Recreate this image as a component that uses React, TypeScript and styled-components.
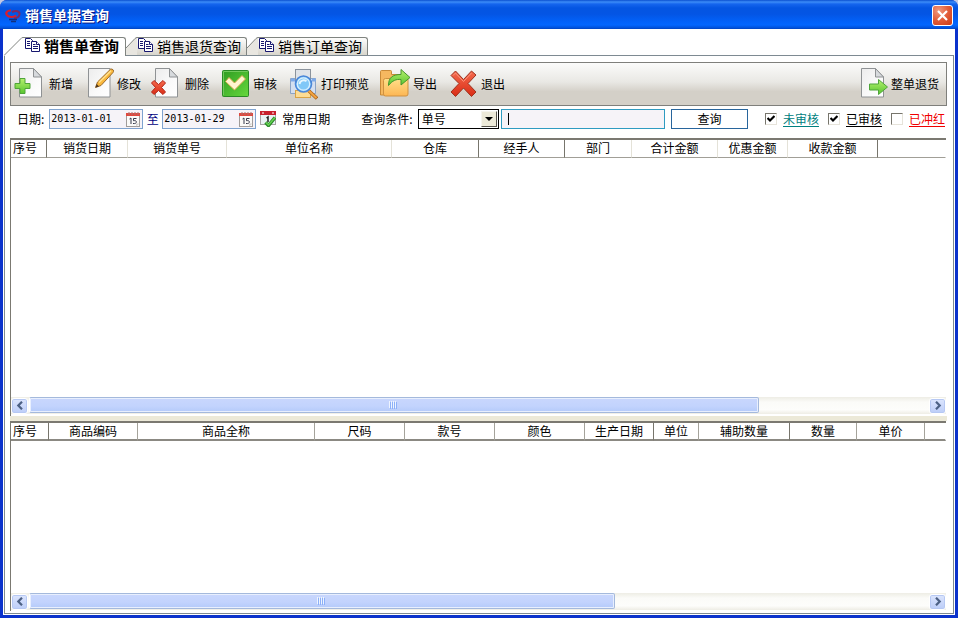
import React from "react";
import styled, { createGlobalStyle, css } from "styled-components";

const Global = createGlobalStyle`
  * { box-sizing: border-box; }
  html, body { margin: 0; padding: 0; background: #c3c9e4; }
  body, button, input, select, table {
    font-family: "Noto Sans CJK SC", sans-serif;
    font-size: 12px;
    line-height: 16px;
    color: #000;
  }
`;

const Window = styled.div`
  height: 100vh;
  display: flex;
  flex-direction: column;
  background: #0a32cc;
  border-radius: 7px 7px 0 0;
  overflow: hidden;
`;

const TitleBar = styled.header`
  height: 29px;
  flex: none;
  display: flex;
  align-items: center;
  gap: 4px;
  padding: 2px 5px 0 5px;
  background: linear-gradient(
    #0a4fd0 0,
    #3c8cf8 2px,
    #1565ee 4px,
    #0455e2 8px,
    #0455e4 14px,
    #0262fa 22px,
    #0366fe 25px,
    #0150d8 28px,
    #0141bd 29px
  );
`;

const Title = styled.h1`
  flex: 1;
  margin: 0;
  padding-bottom: 2px;
  font-size: 14px;
  line-height: 20px;
  font-weight: 700;
  color: #fff;
  text-shadow: 1px 1px 0 #0a1883;
`;

const CloseButton = styled.button`
  width: 21px;
  height: 21px;
  padding: 0;
  display: grid;
  place-items: center;
  border: 1px solid #fff;
  border-radius: 3px;
  background: radial-gradient(circle at 30% 25%, #f09a80, #e25c38 50%, #cc3a14);
`;

const Client = styled.main`
  flex: 1;
  min-height: 0;
  margin: 0 3px 3px 3px;
  padding: 8px 1px 1px 1px;
  display: flex;
  flex-direction: column;
  background: #fff;
`;

const TabStrip = styled.nav`
  display: flex;
  align-items: flex-end;
  height: 18px;
  flex: none;
`;

const TabButton = styled.button<{ $active?: boolean }>`
  display: flex;
  height: ${(p) => (p.$active ? 19 : 18)}px;
  margin-bottom: ${(p) => (p.$active ? -1 : 0)}px;
  padding: 0;
  border: 0;
  background: none;
  z-index: ${(p) => (p.$active ? 1 : 0)};
`;

const TabFace = styled.span<{ $active?: boolean }>`
  height: 100%;
  display: flex;
  align-items: center;
  gap: 3px;
  padding: 0 5px 0 1px;
  border-top: 1px solid #808480;
  border-right: 1px solid #808480;
  border-top-right-radius: 3px;
  line-height: 16px;
  font-size: 14px;
  background: linear-gradient(#fdfdfc, #d8d5cc);
  svg { align-self: flex-start; }
  ${(p) =>
    p.$active &&
    css`
      padding: 0 6px 0 2px;
      font-size: 15px;
      font-weight: 700;
      background: #fff;
    `}
`;

const TabText = styled.span`
  padding-bottom: 2px;
`;

const Panel = styled.section`
  flex: 1;
  min-height: 0;
  display: flex;
  flex-direction: column;
  padding: 6px 6px 2px 5px;
  border: 1px solid #7e8a92;
  background: #fff;
`;

const Toolbar = styled.div`
  flex: none;
  height: 44px;
  display: flex;
  align-items: center;
  gap: 9px;
  padding: 0 7px 0 3px;
  border: 1px solid #7f7f7b;
  background: linear-gradient(#fbfbfa, #e9e8e4 45%, #d4d0c8 68%, #d4d0c8);
`;

const ToolButton = styled.button`
  display: flex;
  align-items: center;
  gap: 3px;
  padding: 0;
  border: 0;
  background: none;
  white-space: nowrap;
  svg { display: block; }
`;

const Spacer = styled.span`
  flex: 1;
`;

const FilterRow = styled.form`
  flex: none;
  display: flex;
  align-items: center;
  padding: 3px 2px 9px 7px;
  white-space: nowrap;
`;

const FieldLabel = styled.label`
  margin-right: 5px;
`;

const DateBox = styled.span`
  width: 94px;
  height: 20px;
  display: flex;
  align-items: center;
  padding: 0 1px;
  border: 1px solid #7fa3cf;
  background: #f6f3f8;
`;

const DateInput = styled.input`
  flex: 1;
  min-width: 0;
  width: 20px;
  height: 16px;
  padding: 0;
  border: 0;
  outline: 0;
  background: transparent;
  font-family: "DejaVu Sans Mono", monospace;
  font-size: 10px;
`;

const PlainButton = styled.button`
  display: flex;
  padding: 0;
  border: 0;
  background: none;
`;

const Between = styled.span`
  width: 19px;
  text-align: center;
  color: #000080;
`;

const CommonDates = styled.button`
  display: flex;
  align-items: center;
  gap: 6px;
  margin: 0 31px 0 4px;
  padding: 0;
  border: 0;
  background: none;
`;

const SelectBox = styled.span`
  width: 81px;
  height: 20px;
  display: flex;
  align-items: center;
  padding-right: 1px;
  border: 1px solid #000;
  background: #fff;
`;

const Select = styled.select`
  flex: 1;
  min-width: 0;
  height: 18px;
  padding: 0 0 0 3px;
  border: 0;
  outline: 0;
  appearance: none;
  background: transparent;
`;

const DropArrow = styled.span`
  width: 16px;
  height: 16px;
  display: grid;
  place-items: center;
  border: 1px solid;
  border-color: #f5f4ee #55534c #55534c #f5f4ee;
  background: #ece9d8;
`;

const SearchBox = styled.span`
  flex: 1;
  height: 20px;
  display: flex;
  align-items: center;
  margin: 0 6px 0 2px;
  padding-left: 6px;
  border: 1px solid #2f9bc1;
  background: #f6f3f8;
`;

const Caret = styled.span`
  width: 1px;
  height: 12px;
  background: #000;
`;

const SearchInput = styled.input`
  flex: 1;
  min-width: 0;
  height: 16px;
  padding: 0;
  border: 0;
  outline: 0;
  background: transparent;
`;

const QueryButton = styled.button`
  width: 77px;
  height: 20px;
  margin-right: 8px;
  padding: 0;
  border: 1px solid #28659c;
  background: #fff;
`;

const CheckLabel = styled.label<{ $tone: string }>`
  display: flex;
  align-items: center;
  gap: 6px;
  margin-left: 9px;
  line-height: 15px;
  color: ${(p) => p.$tone};
`;

const CheckText = styled.span`
  line-height: 14px;
  border-bottom: 1px solid currentColor;
`;

const CheckStack = styled.span`
  display: grid;
  > * { grid-area: 1 / 1; }
  svg { pointer-events: none; margin: 2px; }
`;

const CheckInput = styled.input`
  appearance: none;
  width: 12px;
  height: 12px;
  margin: 0;
  border: 1px solid;
  border-color: #77756c #e6e3da #e6e3da #77756c;
  background: #fff;
  & + svg { visibility: hidden; }
  &:checked + svg { visibility: visible; }
`;

const GridFrame = styled.div<{ $lower?: boolean }>`
  ${(p) => (p.$lower ? "flex: none; height: 190px;" : "flex: 1; min-height: 0;")}
  display: flex;
  flex-direction: column;
  margin-right: 1px;
  padding-bottom: ${(p) => (p.$lower ? 1 : 2)}px;
  border-top: 2px solid #7b7971;
  border-left: 1px solid #7b7971;
  background: #fff;
`;

const HeaderTable = styled.table`
  width: 100%;
  table-layout: fixed;
  border-collapse: separate;
  border-spacing: 0;
`;

type Edge = "dark" | "light" | "mid" | "none";
const edgeColour = { dark: "#77756c", light: "#e4e2d8", mid: "#a5a39b", none: "transparent" };

const HeaderCell = styled.th<{ $edge: Edge; $lower?: boolean }>`
  height: 18px;
  padding: 0;
  font-weight: 400;
  line-height: ${(p) => (p.$lower ? 16 : 15)}px;
  vertical-align: top;
  text-align: center;
  white-space: nowrap;
  overflow: hidden;
  border-right: 1px solid ${(p) => edgeColour[p.$edge]};
  border-bottom: ${(p) => (p.$lower ? "2px solid #8b8982" : "1px solid #a19f97")};
  &:first-child { text-align: left; padding-left: 2px; }
`;

const GridBody = styled.div`
  flex: 1;
`;

const ScrollBar = styled.div`
  flex: none;
  height: 17px;
  display: flex;
  align-items: center;
  background: linear-gradient(#eeede5, #fbfbf8 30%, #fdfdfb 75%, #eeede5);
`;

const ScrollButton = styled.button`
  width: 17px;
  height: 16px;
  padding: 0;
  display: grid;
  place-items: center;
  border: 1px solid #fff;
  border-radius: 3px;
  background: linear-gradient(#dce5fd, #bccdf8);
  box-shadow: inset 0 0 0 1px #b6c8f3;
`;

const ScrollTrack = styled.div`
  flex: 1;
  height: 100%;
`;

const Thumb = styled.div`
  height: 16px;
  margin-left: 1px;
  display: grid;
  place-items: center;
  border: 1px solid #a4b9dc;
  border-left-color: #fff;
  border-radius: 2px;
  box-shadow: inset 0 0 0 1px #e8effe;
  background: linear-gradient(#c9d7fd, #c2d3fd 60%, #b4cafa);
`;

const Splitter = styled.div`
  flex: none;
  height: 5px;
  background: #ece9d8;
`;

const CopyIcon = () => (
  <svg width="16" height="15" viewBox="0 0 16 15" fill="#fff" stroke="#16166e" strokeWidth="1">
    <path d="M.5.5h5l2 2v8h-7z" />
    <path d="M2 3.500h3M2 5.500h3M2 7.500h3" />
    <path d="M6.500 3.500h5l3 3v7h-8z" />
    <path d="M11.500 3.500v3h3M8 6.500h2.500M8 8.500h5M8 10.500h5" />
  </svg>
);

const Slant = ({ active }: { active?: boolean }) =>
  active ? (
    <svg width="19" height="19" viewBox="0 0 19 19">
      <path d="M0 18.500 17 1.500Q17.500.5 19 .5V19H0z" fill="#fff" />
      <path d="M0 18.500 17 1.500Q17.500.5 19 .5" fill="none" stroke="#808480" />
    </svg>
  ) : (
    <svg width="11" height="18" viewBox="0 0 11 18">
      <path d="M0 11 9 1.500 11 .5V18H0z" fill="#e8e6e0" />
      <path d="M0 11 9 1.500Q10 .5 11 .5" fill="none" stroke="#808480" />
    </svg>
  );

const LogoIcon = () => (
  <svg width="16" height="16" viewBox="0 0 16 16" fill="none">
    <path d="M6 2.500C1 2.500 0 6 3 8c2.500 1.500 6 1.200 8-.5" stroke="#d81e2e" strokeWidth="2.200" />
    <path d="M7 4c4-2 8-1 7.500 2.500C14.200 9 12 10 9 10.500" stroke="#7c2a62" strokeWidth="2" />
    <path d="M4 11.500h8M6 13.500h5" stroke="#12307e" strokeWidth="1.600" />
  </svg>
);

const Gradients = () => (
  <defs>
    <linearGradient id="paper" x1="0" y1="0" x2="1" y2="1">
      <stop offset="0" stopColor="#ececec" /><stop offset=".6" stopColor="#fafafa" /><stop offset="1" stopColor="#fff" />
    </linearGradient>
    <linearGradient id="green" x1="0" y1="0" x2="0" y2="1">
      <stop offset="0" stopColor="#b5f06f" /><stop offset="1" stopColor="#58c52f" />
    </linearGradient>
    <linearGradient id="tile" x1="0" y1="0" x2="1" y2="1">
      <stop offset="0" stopColor="#2f9c22" /><stop offset="1" stopColor="#66d83c" />
    </linearGradient>
    <linearGradient id="folder" x1="0" y1="0" x2="0" y2="1">
      <stop offset="0" stopColor="#ffe08a" /><stop offset="1" stopColor="#fdb654" />
    </linearGradient>
    <linearGradient id="red" x1="0" y1="0" x2="0" y2="1">
      <stop offset="0" stopColor="#f56b4f" /><stop offset="1" stopColor="#d92b14" />
    </linearGradient>
  </defs>
);

const Paper = () => (
  <>
    <path d="M5.500.5h14l8 8.500v20h-22z" fill="url(#paper)" stroke="#8f9294" />
    <path d="M19.500.5V9h8z" fill="#d7dadd" stroke="#8f9294" />
  </>
);

const Art = ({ children }: { children: React.ReactNode }) => (
  <svg width="32" height="32" viewBox="0 0 32 32">
    <Gradients />
    {children}
  </svg>
);

const NewArt = () => (
  <Art>
    <Paper />
    <path d="M6 10.500h5v5h5v5h-5v5H6v-5H1v-5h5z" fill="url(#green)" stroke="#4fa53a" strokeLinejoin="round" />
  </Art>
);

const EditArt = () => (
  <Art>
    <path d="M6.500.5h21.500v28.500h-21.500z" fill="url(#paper)" stroke="#8f9294" />
    <path d="M13.500 19.500l2-5.500L28.500 1.200q1.500-.7 2.800.8.7 1.500-.3 2.500L19 17.500z" fill="#f9b73c" stroke="#9b6a2b" />
    <path d="M17 14.500 29 2.800" stroke="#ffe08c" strokeWidth="1.500" />
    <path d="M13.500 19.500l1.200-3.500 2.300 2.500z" fill="#4a3520" />
  </Art>
);

const DeleteArt = () => (
  <Art>
    <Paper />
    <path d="M1.500 15 4 12.500l4.500 4 4.500-4 2.500 2.500-4 4.500 4 4.500-2.500 2.500-4.500-4-4.500 4L1.500 24l4-4.500z" fill="url(#red)" stroke="#b5281a" strokeLinejoin="round" />
  </Art>
);

const AuditArt = () => (
  <Art>
    <rect x="4.500" y="2.500" width="26" height="26" rx="1" fill="url(#tile)" stroke="#2a8a25" />
    <path d="M5.500 27V3.500h24" stroke="#72c95c" fill="none" />
    <path d="M7.500 13.500l3.500-4 5.500 5.500L24 7.500l3.500 3.500-11 11z" fill="#fff5d0" stroke="#d6a94e" strokeLinejoin="round" />
  </Art>
);

const PreviewArt = () => (
  <Art>
    <path d="M4.500 10.500h25v15h-25z" fill="#d4dff0" stroke="#8ba4c6" />
    <path d="M5 10.500h4v3H5zM26 10.500h4v3h-4z" fill="#7eaae8" />
    <rect x="9.500" y="1.500" width="15" height="12" fill="#dfe3e8" stroke="#8b939c" />
    <rect x="9.500" y="22.500" width="15" height="7" fill="#fddc94" stroke="#d9a345" />
    <path d="M22.500 22.500l8.500 8" stroke="#a8641e" strokeWidth="3.500" />
    <path d="M22 22l8.500 8" stroke="#f3a33f" strokeWidth="2" />
    <circle cx="17.500" cy="16" r="8" fill="#80c8f8" stroke="#4a86d8" strokeWidth="1.600" />
    <circle cx="17.500" cy="16" r="6.200" fill="none" stroke="#d8f0ff" strokeWidth="1.300" />
    <path d="M13.500 16c.5-3.500 4-4.500 7-3" stroke="#e6f6ff" strokeWidth="2" fill="none" />
  </Art>
);

const ExportArt = () => (
  <Art>
    <path d="M2.500 27V3.500q0-1 1-1h9q1 0 1 1v3h14.500V27z" fill="#f5b860" stroke="#c88a38" />
    <path d="M5.500 12.500q0-2 2-2h21q1.500 0 1.500 1V26q0 2-2 2H7.500q-2 0-2-2z" fill="url(#folder)" stroke="#cf9140" />
    <path d="M10.500 17.500c0-8 4-11 12.500-11v-5l9 8-9 7.500v-5.500c-5-.5-8.500 1-12.500 6z" fill="url(#green)" stroke="#46962e" strokeLinejoin="round" />
  </Art>
);

const ExitArt = () => (
  <Art>
    <path d="M5 7.500 9.500 3l8 8.500 8-8.500L30 7l-8 8.500 8 8.500-4.500 4.500-8-8.500-8 8.500L5 24l8-8.500z" fill="url(#red)" stroke="#9c321f" strokeLinejoin="round" />
    <path d="M7 7.500 9.500 5l8 8.500 8-8.500" fill="none" stroke="#fa967c" />
  </Art>
);

const ReturnArt = () => (
  <Art>
    <Paper />
    <path d="M13.500 16h9v-4.500l9 7.500-9 7.500V22h-9z" fill="url(#green)" stroke="#4fa53a" strokeLinejoin="round" />
  </Art>
);

const CalendarIcon = () => (
  <svg width="16" height="16" viewBox="0 0 16 16">
    <rect x="1.500" y="2.500" width="13" height="13" fill="#fbfaf8" stroke="#a09c9a" />
    <path d="M1 2h14v3H1z" fill="#e0483e" />
    <path d="M4 1v3M7 1v3M10 1v3M13 1v3" stroke="#a8726e" />
    <path d="M4.500 8 6 7v6M11.500 7.500h-3v2.200c4-.8 4 3.500-.5 2.800" fill="none" stroke="#35384a" />
    <path d="M11 15.500v-3h3.500z" fill="#d6d2cf" />
  </svg>
);

const CalendarCheckIcon = () => (
  <svg width="16" height="16" viewBox="0 0 16 16">
    <rect x=".5" y=".5" width="15" height="13" fill="#e9f2f5" stroke="#a7a3a4" />
    <path d="M0 0h16v4H0z" fill="#c8202e" />
    <path d="M2 2h2M12 2h2" stroke="#fff" />
    <path d="M6.500 7 8 6v5" stroke="#222" strokeWidth="1.500" fill="none" />
    <path d="M5.500 11.500l3 3 6.500-8" stroke="#2b8c2a" strokeWidth="3.500" fill="none" />
    <path d="M6 11.500l2.500 2.500L15 6.500" stroke="#67d253" strokeWidth="1.500" fill="none" />
  </svg>
);

const TickIcon = () => (
  <svg width="8" height="8" viewBox="0 0 8 8">
    <path d="M.5 3 3 5.500 7.500 1" fill="none" stroke="#000" strokeWidth="2.200" />
  </svg>
);

const Chevron = ({ right }: { right?: boolean }) => (
  <svg width="8" height="9" viewBox="0 0 8 9">
    <path d={right ? "M2 .7 5.700 4.500 2 8.300" : "M6 .7 2.300 4.500 6 8.300"} fill="none" stroke="#4d6185" strokeWidth="2.200" />
  </svg>
);

const Grip = () => (
  <svg width="9" height="8" viewBox="0 0 9 8">
    <path d="M.5 0v7M2.500 0v7M4.500 0v7M6.500 0v7" stroke="#eef4fe" />
    <path d="M1.500 1v7M3.500 1v7M5.500 1v7M7.500 1v7" stroke="#8cb0f8" />
  </svg>
);

const Scroll = ({ extent }: { extent: number }) => (
  <ScrollBar>
    <ScrollButton type="button" aria-label="向左"><Chevron /></ScrollButton>
    <ScrollTrack>
      <Thumb style={{ width: `${extent}%` }}><Grip /></Thumb>
    </ScrollTrack>
    <ScrollButton type="button" aria-label="向右"><Chevron right /></ScrollButton>
  </ScrollBar>
);

type Column = { label: string; width?: number; edge: Edge };

const billColumns: Column[] = [
  { label: "序号", width: 36, edge: "dark" },
  { label: "销货日期", width: 81, edge: "light" },
  { label: "销货单号", width: 99, edge: "light" },
  { label: "单位名称", width: 165, edge: "light" },
  { label: "仓库", width: 87, edge: "dark" },
  { label: "经手人", width: 86, edge: "dark" },
  { label: "部门", width: 67, edge: "light" },
  { label: "合计金额", width: 86, edge: "light" },
  { label: "优惠金额", width: 70, edge: "light" },
  { label: "收款金额", width: 90, edge: "dark" },
  { label: "", edge: "none" },
];

const itemColumns: Column[] = [
  { label: "序号", width: 38, edge: "dark" },
  { label: "商品编码", width: 89, edge: "mid" },
  { label: "商品全称", width: 177, edge: "mid" },
  { label: "尺码", width: 90, edge: "mid" },
  { label: "款号", width: 90, edge: "mid" },
  { label: "颜色", width: 90, edge: "mid" },
  { label: "生产日期", width: 69, edge: "dark" },
  { label: "单位", width: 45, edge: "mid" },
  { label: "辅助数量", width: 91, edge: "dark" },
  { label: "数量", width: 67, edge: "mid" },
  { label: "单价", width: 68, edge: "mid" },
  { label: "", edge: "none" },
];

const DataGrid = ({ columns, extent, lower }: { columns: Column[]; extent: number; lower?: boolean }) => (
  <GridFrame $lower={lower}>
    <HeaderTable>
      <colgroup>
        {columns.map((c, i) => <col key={i} width={c.width} />)}
      </colgroup>
      <thead>
        <tr>
          {columns.map((c, i) => (
            <HeaderCell key={i} scope="col" $edge={c.edge} $lower={lower}>{c.label}</HeaderCell>
          ))}
        </tr>
      </thead>
    </HeaderTable>
    <GridBody />
    <Scroll extent={extent} />
  </GridFrame>
);

const tools = [
  { label: "新增", Icon: NewArt },
  { label: "修改", Icon: EditArt },
  { label: "删除", Icon: DeleteArt },
  { label: "审核", Icon: AuditArt },
  { label: "打印预览", Icon: PreviewArt },
  { label: "导出", Icon: ExportArt },
  { label: "退出", Icon: ExitArt },
];

const tabs = ["销售单查询", "销售退货查询", "销售订单查询"];

const checks = [
  { label: "未审核", tone: "#008080", on: true },
  { label: "已审核", tone: "#000", on: true },
  { label: "已冲红", tone: "#f00000", on: false },
];

const DateField = ({ id, value }: { id: string; value: string }) => (
  <DateBox>
    <DateInput id={id} aria-label="日期" defaultValue={value} />
    <PlainButton type="button" aria-label="选择日期"><CalendarIcon /></PlainButton>
  </DateBox>
);

export default function App() {
  return (
    <>
      <Global />
      <Window>
        <TitleBar>
          <LogoIcon />
          <Title>销售单据查询</Title>
          <CloseButton aria-label="关闭">
            <svg width="13" height="13" viewBox="0 0 13 13">
              <path d="M2 2l9 9M11 2l-9 9" stroke="#fff" strokeWidth="2.200" />
            </svg>
          </CloseButton>
        </TitleBar>
        <Client>
          <TabStrip>
            {tabs.map((t, i) => (
              <TabButton key={t} $active={i === 0}>
                <Slant active={i === 0} />
                <TabFace $active={i === 0}><CopyIcon /><TabText>{t}</TabText></TabFace>
              </TabButton>
            ))}
          </TabStrip>
          <Panel>
            <Toolbar>
              {tools.map(({ label, Icon }) => (
                <ToolButton key={label}><Icon />{label}</ToolButton>
              ))}
              <Spacer />
              <ToolButton><ReturnArt />整单退货</ToolButton>
            </Toolbar>
            <FilterRow onSubmit={(e) => e.preventDefault()}>
              <FieldLabel htmlFor="from">日期:</FieldLabel>
              <DateField id="from" value="2013-01-01" />
              <Between>至</Between>
              <DateField id="to" value="2013-01-29" />
              <CommonDates type="button"><CalendarCheckIcon />常用日期</CommonDates>
              <FieldLabel htmlFor="field">查询条件:</FieldLabel>
              <SelectBox>
                <Select id="field" defaultValue="单号"><option>单号</option></Select>
                <DropArrow>
                  <svg width="8" height="4" viewBox="0 0 8 4"><path d="M0 0h8L4 4z" /></svg>
                </DropArrow>
              </SelectBox>
              <SearchBox>
                <Caret />
                <SearchInput aria-label="查询内容" />
              </SearchBox>
              <QueryButton type="submit">查询</QueryButton>
              {checks.map((c) => (
                <CheckLabel key={c.label} $tone={c.tone}>
                  <CheckStack>
                    <CheckInput type="checkbox" defaultChecked={c.on} />
                    <TickIcon />
                  </CheckStack>
                  <CheckText>{c.label}</CheckText>
                </CheckLabel>
              ))}
            </FilterRow>
            <DataGrid columns={billColumns} extent={81} />
            <Splitter />
            <DataGrid columns={itemColumns} extent={65} lower />
          </Panel>
        </Client>
      </Window>
    </>
  );
}
